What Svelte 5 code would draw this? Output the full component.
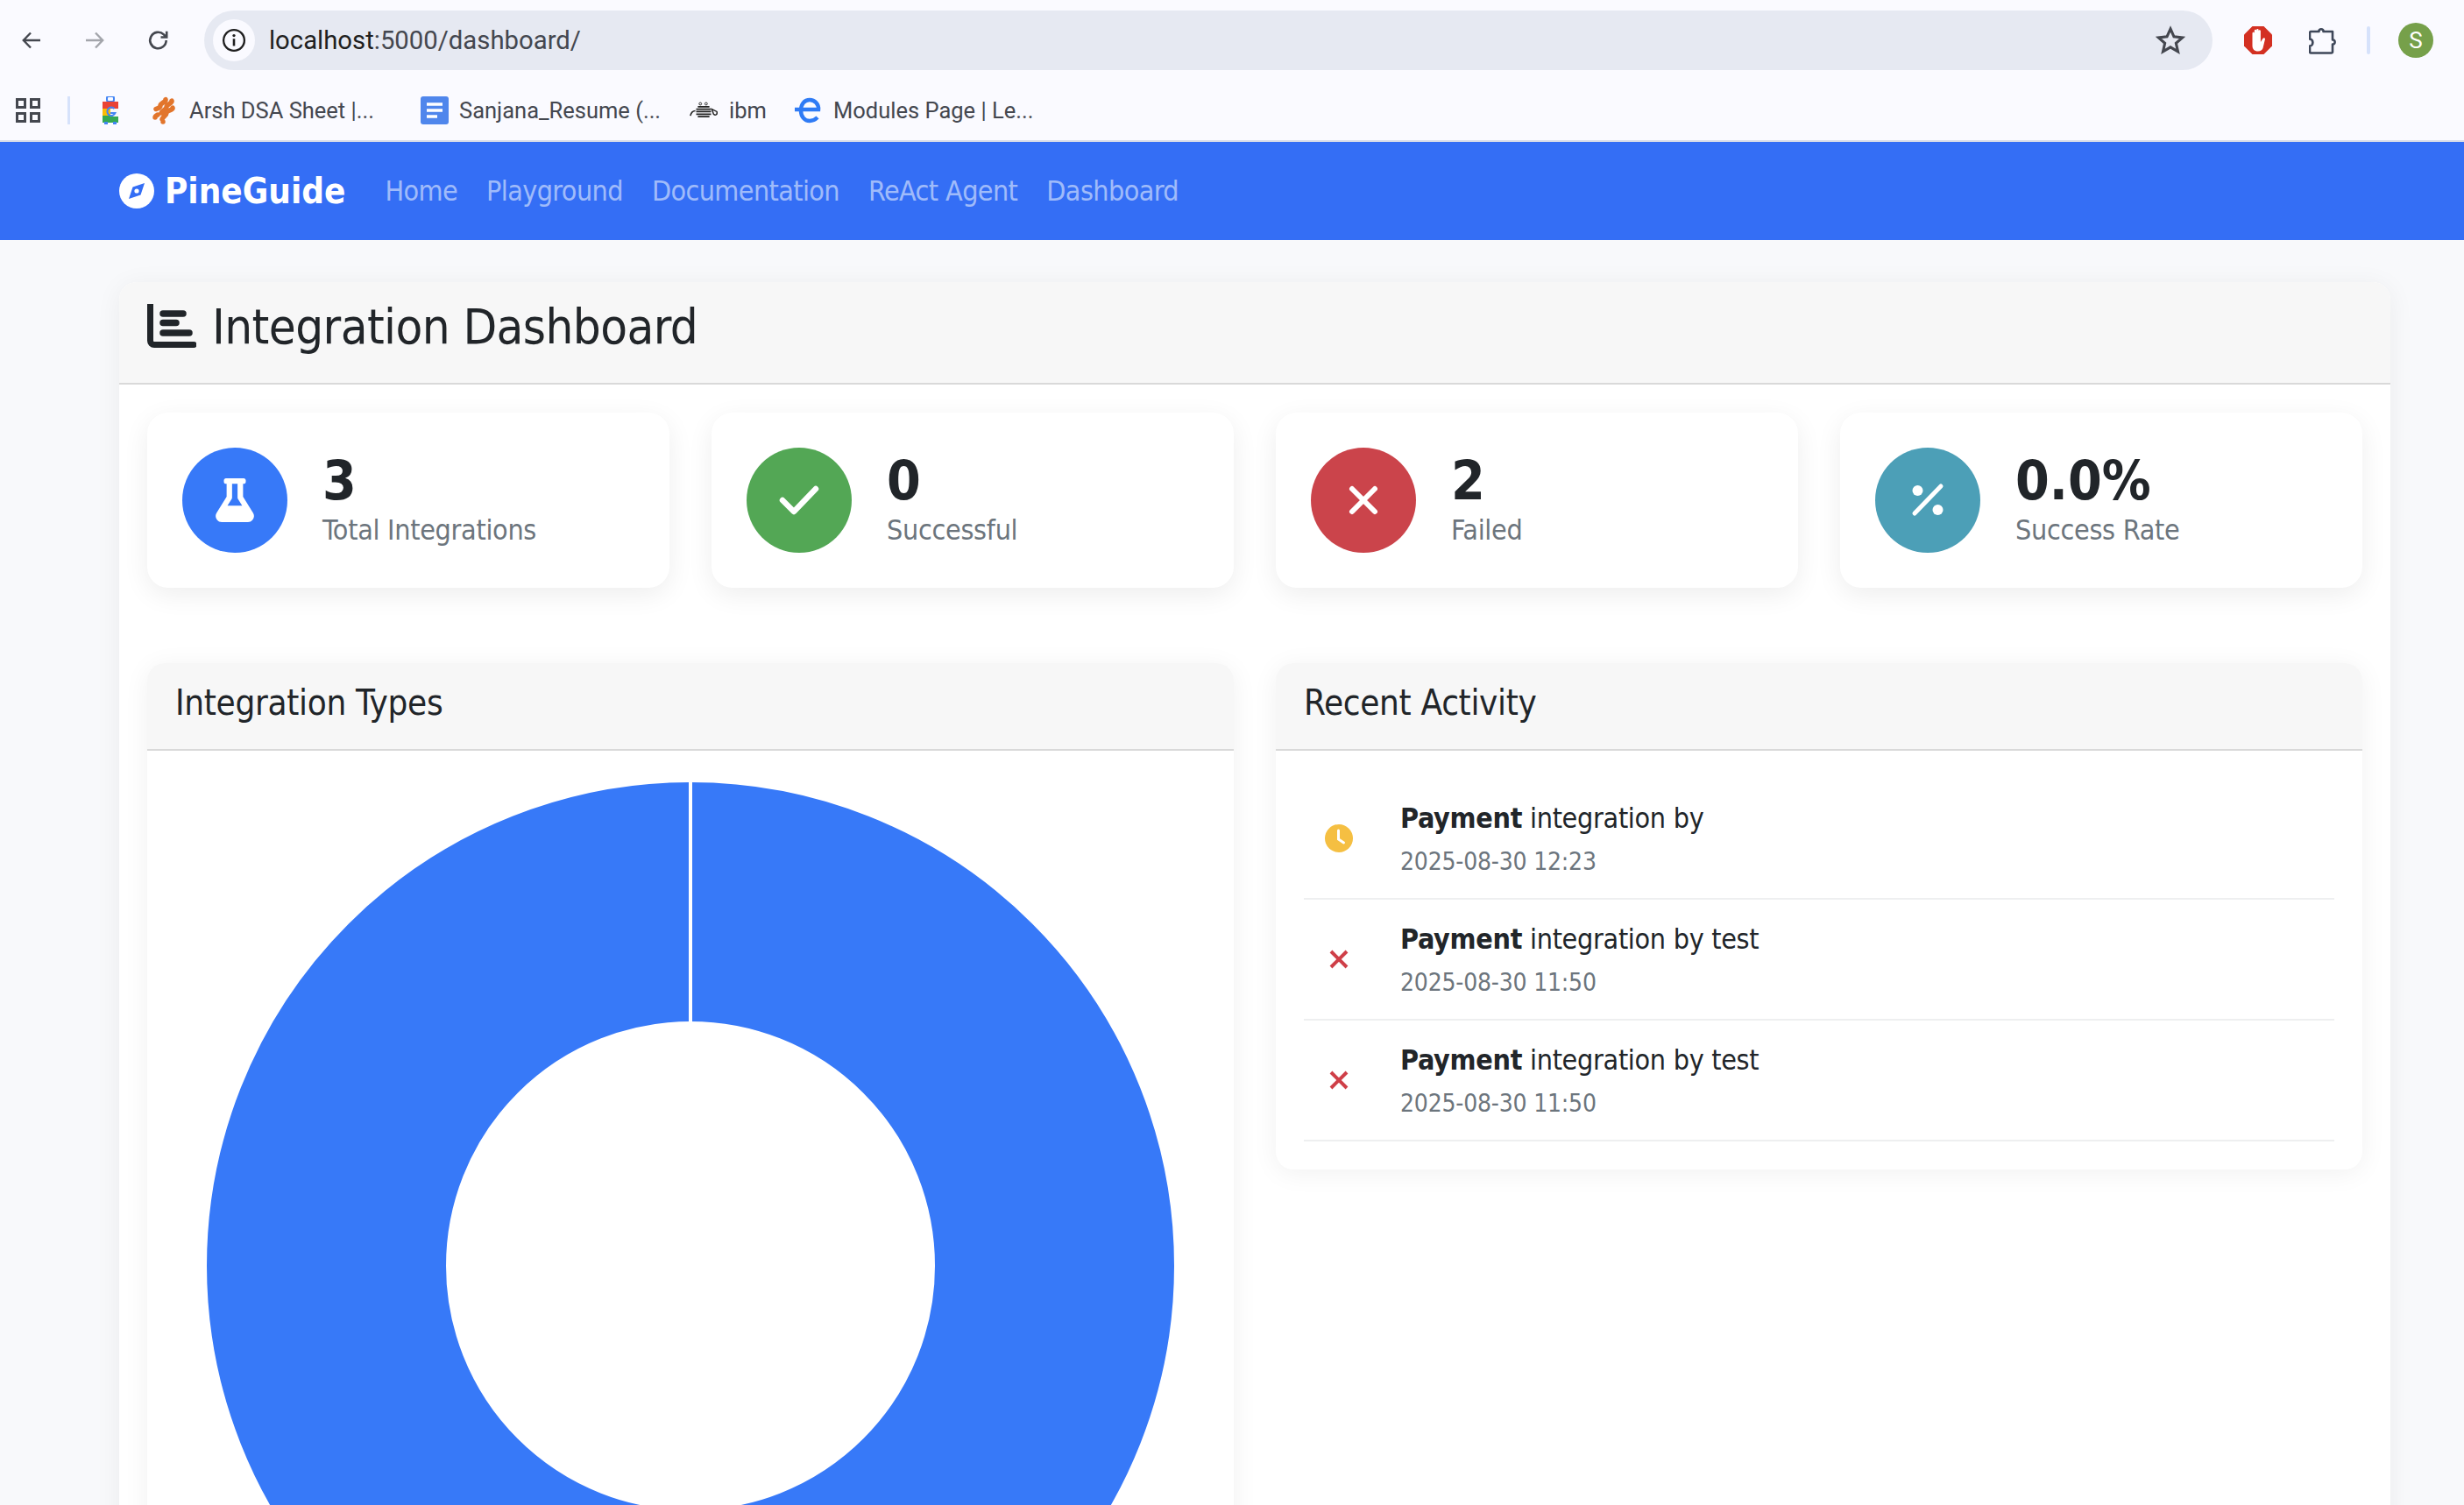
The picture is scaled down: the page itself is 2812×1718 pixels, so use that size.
<script>
  const links = ['Home', 'Playground', 'Documentation', 'ReAct Agent', 'Dashboard'];
  const stats = [
    { value: '3', label: 'Total Integrations', tone: 'blue', icon: 'flask' },
    { value: '0', label: 'Successful', tone: 'green', icon: 'check' },
    { value: '2', label: 'Failed', tone: 'red', icon: 'times' },
    { value: '0.0%', label: 'Success Rate', tone: 'teal', icon: 'percent' }
  ];
  const activity = [
    { status: 'pending', who: 'Payment', text: ' integration by', time: '2025-08-30 12:23' },
    { status: 'failed', who: 'Payment', text: ' integration by test', time: '2025-08-30 11:50' },
    { status: 'failed', who: 'Payment', text: ' integration by test', time: '2025-08-30 11:50' }
  ];
</script>

<div class="page">
  <header class="chrome">
    <div class="toolbar">
      <svg class="tb-btn" viewBox="0 0 24 24" width="24" height="24"><path d="M22 12H3M11 3.5 2.8 12l8.2 8.500" fill="none" stroke="#44474f" stroke-width="2.400"/></svg>
      <svg class="tb-btn" viewBox="0 0 24 24" width="24" height="24"><path d="M2 12h19M13 3.500 21.200 12 13 20.500" fill="none" stroke="#a3a5ab" stroke-width="2.400"/></svg>
      <svg class="tb-btn" viewBox="0 0 24 24" width="26" height="26"><path d="M20 12a8.500 8.500 0 1 1-2.600-6.100L20 8.400M20.500 2.500v6.200h-6.200" fill="none" stroke="#44474f" stroke-width="2.400"/></svg>
      <div class="omnibox">
        <span class="info">
          <svg viewBox="0 0 24 24" width="28" height="28"><circle cx="12" cy="12" r="10.200" fill="none" stroke="#1f1f1f" stroke-width="2"/><path d="M12 10.500v7" stroke="#1f1f1f" stroke-width="2.200"/><circle cx="12" cy="7.300" r="1.400" fill="#1f1f1f"/></svg>
        </span>
        <span class="url">localhost<span class="url-dim">:5000/dashboard/</span></span>
        <svg class="star" viewBox="0 0 24 24" width="34" height="34"><path d="m12 2.800 2.800 6.300 6.800.7-5.100 4.500 1.500 6.700-6-3.500-6 3.500 1.500-6.700-5.100-4.500 6.800-.7z" fill="none" stroke="#44474f" stroke-width="2.200" stroke-linejoin="miter"/></svg>
      </div>
      <div class="tb-right">
        <svg viewBox="0 0 32 32" width="32" height="32">
          <polygon points="9.500,0 22.500,0 32,9.500 32,22.500 22.500,32 9.500,32 0,22.500 0,9.500" fill="#d33022"/>
          <path d="M9.500 13V8c0-1.600 2.300-1.600 2.300 0v6V5c0-1.600 2.400-1.600 2.400 0v9V4.200c0-1.600 2.400-1.600 2.400 0V14V5.500c0-1.600 2.300-1.600 2.300 0V18l2.500-4c1-1.500 3.200-.6 2.500 1L21.500 25c-1 2.300-2.500 3.500-5.500 3.500-4.500 0-6.500-2.500-6.500-6.500z" fill="#fff"/>
        </svg>
        <svg viewBox="0 0 32 32" width="32" height="32">
          <path d="M2 6h9.500c-.7-3.600 5.700-3.600 5-0h10.500v9.500c3.500-.7 3.500 5.700 0 5V29a1.500 1.500 0 0 1-1.500 1.500H2.500A1.500 1.500 0 0 1 1 29v-6.500c4.500 0 4.500-8 0-8V7z" fill="none" stroke="#3e4759" stroke-width="2.600" stroke-linejoin="round"/>
        </svg>
        <span class="tb-sep"></span>
        <span class="avatar">S</span>
      </div>
    </div>
    <div class="bookmarks">
      <svg class="apps" viewBox="0 0 28 28" width="28" height="28"><g fill="none" stroke="#44474f" stroke-width="3"><rect x="1.500" y="1.500" width="9" height="9"/><rect x="17.500" y="1.500" width="9" height="9"/><rect x="1.500" y="17.500" width="9" height="9"/><rect x="17.500" y="17.500" width="9" height="9"/></g></svg>
      <span class="bm-sep"></span>
      <svg class="bm-google" viewBox="0 0 18 32" width="18" height="32">
        <rect x="5" y="0" width="8" height="6" rx="2" fill="none" stroke="#4285f4" stroke-width="2"/>
        <rect x="0" y="6" width="18" height="8" fill="#ea4335"/>
        <rect x="0" y="14" width="9" height="10" fill="#fbbc05"/>
        <rect x="0" y="22" width="18" height="8" fill="#34a853"/>
        <rect x="9" y="14" width="9" height="9" fill="#f7f7f7"/>
        <rect x="2" y="29" width="4" height="3" fill="#4285f4"/><rect x="12" y="29" width="4" height="3" fill="#4285f4"/>
        <path d="M13.500 14a4.700 4.700 0 1 0 1 5H9" fill="none" stroke="#4285f4" stroke-width="2"/>
      </svg>
      <span class="bm first">
        <svg viewBox="0 0 28 32" width="28" height="32"><g fill="none" stroke="#e2752c" stroke-width="5.500" stroke-linecap="round"><path d="M17 3.500c1 3-6 4-6 7s-3 3-5 4M24 5c1 3-6 4-6 7s-5 4-6 7M25 13c1 3-7 3-7 6s-4 4-5 7M8 21c-2 1-3 2-3 3M14 29v0"/></g></svg>
        <span class="bm-text">Arsh DSA Sheet |...</span>
      </span>
      <span class="bm doc">
        <svg viewBox="0 0 32 32" width="32" height="32"><rect width="32" height="32" rx="3" fill="#4f86ec"/><path d="M7 9h18M7 16h18M7 23h12" stroke="#fff" stroke-width="3.400"/></svg>
        <span class="bm-text">Sanjana_Resume (...</span>
      </span>
      <span class="bm ibm">
        <svg viewBox="0 0 36 22" width="34" height="21"><g stroke="#222" fill="none"><path d="M2 17c1-4 3-6 6-6" stroke-width="1.800"/><path d="M11 6h14M9 9h18M9 12h18M9 15h18M11 18h14" stroke-width="1.800"/><circle cx="14" cy="2.500" r="1.500"/><circle cx="21" cy="2.500" r="1.500"/><path d="m28 9 6 3c1 4-2 5-4 3z" stroke-width="1.500"/></g></svg>
        <span class="bm-text">ibm</span>
      </span>
      <span class="bm eicon">
        <svg viewBox="0 0 32 32" width="32" height="32"><path d="M0 15h27c.5-6-4-11-10-11S7 9 7 16s4 12 10 12c4 0 7-2 9-4" fill="none" stroke="#2f7bf5" stroke-width="4.500"/></svg>
        <span class="bm-text">Modules Page | Le...</span>
      </span>
    </div>
  </header>

  <nav class="navbar">
    <span class="brand">
      <svg viewBox="0 0 40 40" width="40" height="40">
        <circle cx="20" cy="20" r="20" fill="#fff"/>
        <polygon points="29,11 24.500,24.500 11,29 15.500,15.500" fill="#346ef5"/>
        <circle cx="20" cy="20" r="2.600" fill="#fff"/>
      </svg>
      PineGuide
    </span>
    <div class="links">
      {#each links as link}
        <span class="link">{link}</span>
      {/each}
    </div>
  </nav>

  <main class="main">
    <section class="card shell">
      <header class="shell-head">
        <svg viewBox="0 0 56 50" width="56" height="50">
          <path d="M3.500 0v42a4.500 4.500 0 0 0 4.500 4.500h45" fill="none" stroke="#212529" stroke-width="7" stroke-linecap="round"/>
          <g stroke="#212529" stroke-width="7.500" stroke-linecap="round">
            <path d="M18 11h23M18 21.500h15M18 33h30"/>
          </g>
        </svg>
        <h1>Integration Dashboard</h1>
      </header>
      <div class="shell-body">
        <div class="stats">
          {#each stats as s}
            <article class="stat">
              <span class="disc {s.tone}">
                {#if s.icon === 'flask'}
                  <svg viewBox="0 0 448 512" width="44" height="50"><path fill="#fff" d="M437.200 403.500L320 215V64h8c13.300 0 24-10.700 24-24V24c0-13.300-10.700-24-24-24H120c-13.300 0-24 10.700-24 24v16c0 13.300 10.700 24 24 24h8v151L10.800 403.500C-18.500 450.600 15.300 512 70.900 512h306.200c55.700 0 89.400-61.500 60.100-108.500zM137.900 320l48.200-77.600c3.700-5.200 5.800-11.600 5.800-18.400V64h64v160c0 6.900 2.200 13.200 5.800 18.400l48.200 77.600h-172z"/></svg>
                {:else if s.icon === 'check'}
                  <svg viewBox="0 0 48 40" width="48" height="40"><path d="M5 20l13 13L43 7" fill="none" stroke="#fff" stroke-width="6.500" stroke-linecap="round" stroke-linejoin="round"/></svg>
                {:else if s.icon === 'times'}
                  <svg viewBox="0 0 36 36" width="36" height="36"><path d="M5 5l26 26M31 5 5 31" fill="none" stroke="#fff" stroke-width="6" stroke-linecap="round"/></svg>
                {:else}
                  <svg viewBox="0 0 44 44" width="44" height="44"><path d="M7 37 37 6" stroke="#fff" stroke-width="5" stroke-linecap="round"/><circle cx="10.500" cy="11" r="6" fill="#fff"/><circle cx="33.500" cy="33" r="6" fill="#fff"/></svg>
                {/if}
              </span>
              <div class="stat-text">
                <div class="stat-value">{s.value}</div>
                <div class="stat-label">{s.label}</div>
              </div>
            </article>
          {/each}
        </div>

        <div class="columns">
          <section class="card panel">
            <h2 class="panel-head">Integration Types</h2>
            <div class="chart">
              <svg viewBox="0 0 1176 1176" width="1176" height="1176">
                <circle cx="588" cy="588" r="415.500" fill="none" stroke="#3779f8" stroke-width="273"/>
                <rect x="586" y="30" width="4" height="280" fill="#fff"/>
              </svg>
            </div>
          </section>

          <section class="card panel activity">
            <h2 class="panel-head">Recent Activity</h2>
            <ul class="feed">
              {#each activity as a}
                <li class="feed-item">
                  <span class="feed-icon">
                    {#if a.status === 'pending'}
                      <svg viewBox="0 0 32 32" width="32" height="32"><circle cx="16" cy="16" r="16" fill="#f5bf42"/><path d="M15.500 7v10l6 4" fill="none" stroke="#fff" stroke-width="3" stroke-linecap="round"/></svg>
                    {:else}
                      <svg viewBox="0 0 22 22" width="22" height="22"><path d="M2 2l18 18M20 2 2 20" fill="none" stroke="#cf3f48" stroke-width="4"/></svg>
                    {/if}
                  </span>
                  <div class="feed-text">
                    <div class="feed-title"><strong>{a.who}</strong>{a.text}</div>
                    <div class="feed-time">{a.time}</div>
                  </div>
                </li>
              {/each}
            </ul>
          </section>
        </div>
      </div>
    </section>
  </main>
</div>

<style>
  :global(body) { margin: 0; background: #f8f9fb; }
  .page {
    height: 1718px;
    overflow: hidden;
    font-family: "DejaVu Sans Condensed", "DejaVu Sans", sans-serif;
    color: #212529;
  }
  .chrome {
    height: 160px;
    background: #fafaff;
    border-bottom: 2px solid #d9dde8;
    font-family: Roboto, "Liberation Sans", sans-serif;
  }
  .toolbar {
    height: 92px;
    display: flex;
    align-items: center;
    padding: 0 36px 0 24px;
  }
  .tb-btn { flex: none; margin-right: 48px; }
  .tb-btn:nth-child(3) { margin-right: 39px; }
  .omnibox {
    flex: none;
    width: 2292px;
    height: 68px;
    box-sizing: border-box;
    border-radius: 34px;
    background: #e6e9f2;
    display: flex;
    align-items: center;
    padding: 0 31px 0 10px;
  }
  .info {
    width: 48px;
    height: 48px;
    border-radius: 50%;
    background: #fafaff;
    display: flex;
    align-items: center;
    justify-content: center;
  }
  .url { margin-left: 16px; font-size: 29.300px; color: #1f1f1f; flex: 1; }
  .url-dim { color: #44474f; }
  .tb-right { display: flex; align-items: center; margin-left: 36px; }
  .tb-right svg:nth-child(2) { margin-left: 42px; }
  .tb-sep { width: 4px; height: 32px; border-radius: 2px; background: #d6e2fb; margin: 0 32px 0 34px; }
  .avatar {
    width: 40px;
    height: 40px;
    border-radius: 50%;
    background: #76a04a;
    color: #fff;
    font-size: 26px;
    display: flex;
    align-items: center;
    justify-content: center;
  }
  .bookmarks {
    height: 68px;
    display: flex;
    align-items: center;
    padding-left: 18px;
    font-size: 25.500px;
    color: #44474f;
  }
  .bm-sep { width: 3px; height: 32px; background: #d6e2fb; margin: 0 37px 0 31px; }
  .bm { display: flex; align-items: center; white-space: nowrap; }
  .bm-text { display: block; }
  .first { margin-left: 37px; gap: 16px; width: 308px; }
  .doc { gap: 12px; width: 306px; }
  .ibm { gap: 12px; width: 121px; }
  .eicon { gap: 12px; }
  .navbar {
    height: 112px;
    background: #346ef5;
    display: flex;
    align-items: center;
    padding-left: 136px;
  }
  .brand {
    display: flex;
    align-items: center;
    gap: 12px;
    color: #fff;
    font-size: 40px;
    font-weight: 700;
  }
  .links { display: flex; margin-left: 45px; gap: 33px; }
  .link { font-size: 32px; letter-spacing: -0.6px; color: rgba(255, 255, 255, 0.55); }
  .main { padding: 48px 84px 0 136px; }
  .card {
    background: #fff;
    border-radius: 20px;
    box-shadow: 0 4px 30px rgba(0, 0, 0, 0.06);
  }
  .shell-head {
    height: 117px;
    box-sizing: border-box;
    display: flex;
    align-items: flex-start;
    gap: 18px;
    padding: 25px 32px 0;
    background: #f7f7f7;
    border-bottom: 2px solid #d9d9d9;
    border-radius: 20px 20px 0 0;
  }
  h1 { margin: -8px 0 0; font-size: 56px; font-weight: 400; line-height: 1.2; letter-spacing: -0.6px; }
  .shell-body { padding: 32px; }
  .stats { display: grid; grid-template-columns: repeat(4, 1fr); gap: 48px; }
  .stat {
    height: 200px;
    box-sizing: border-box;
    padding: 0 40px;
    display: flex;
    align-items: center;
    gap: 40px;
    background: #fff;
    border-radius: 24px;
    box-shadow: 0 8px 30px rgba(0, 0, 0, 0.07);
  }
  .disc {
    flex: none;
    width: 120px;
    height: 120px;
    border-radius: 50%;
    display: flex;
    align-items: center;
    justify-content: center;
  }
  .blue { background: #3779f8; }
  .green { background: #53a755; }
  .red { background: #cb444b; }
  .teal { background: #4c9fb7; }
  .stat-value { font-size: 62px; font-weight: 700; line-height: 72px; margin-top: -4px; }
  .stat-label { font-size: 32px; line-height: 40px; color: #6c757d; letter-spacing: -0.3px; }
  .columns { display: grid; grid-template-columns: 1fr 1fr; gap: 48px; margin-top: 86px; align-items: start; }
  .panel-head {
    margin: 0;
    height: 100px;
    box-sizing: border-box;
    display: flex;
    align-items: center;
    padding: 0 32px 8px;
    font-size: 40px;
    font-weight: 400;
    letter-spacing: -0.3px;
    background: #f7f7f7;
    border-bottom: 2px solid #d9d9d9;
    border-radius: 20px 20px 0 0;
  }
  .chart { padding: 0 32px 32px; }
  .chart svg { display: block; }
  .feed { list-style: none; margin: 0; padding: 32px 32px 32px; }
  .feed-item {
    height: 136px;
    display: flex;
    align-items: center;
    gap: 0;
    border-bottom: 2px solid #eeeff0;
  }
  .feed-icon { flex: none; width: 110px; display: flex; justify-content: center; padding-right: 30px; box-sizing: border-box; }
  .feed-text { padding-top: 4px; }
  .feed-title { font-size: 32px; line-height: 48px; letter-spacing: -0.3px; }
  .feed-time { font-size: 28px; line-height: 48px; color: #6c757d; letter-spacing: -0.2px; margin-top: 2px; }
</style>
